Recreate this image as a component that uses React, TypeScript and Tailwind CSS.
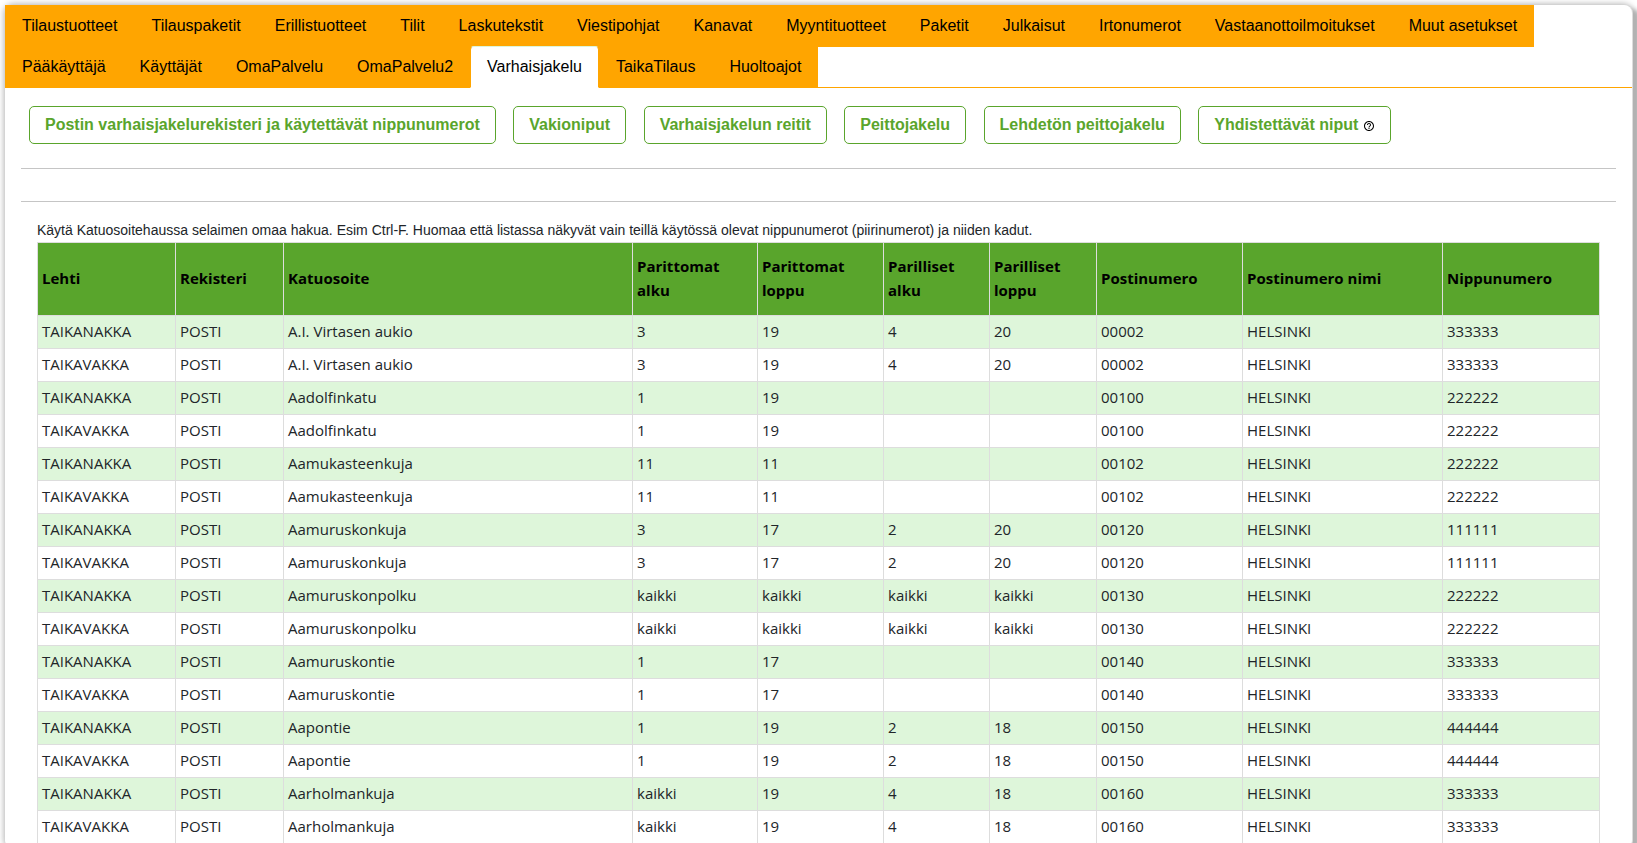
import React, { type FC } from 'react'
import clsx from 'clsx'

interface ITab {
  label: string
  isActive?: boolean
}

interface IRegisterRow {
  street: string
  odd: [string, string]
  even: [string, string]
  postalCode: string
  bundle: string
}

const TABS: ITab[] = [
  { label: 'Tilaustuotteet' },
  { label: 'Tilauspaketit' },
  { label: 'Erillistuotteet' },
  { label: 'Tilit' },
  { label: 'Laskutekstit' },
  { label: 'Viestipohjat' },
  { label: 'Kanavat' },
  { label: 'Myyntituotteet' },
  { label: 'Paketit' },
  { label: 'Julkaisut' },
  { label: 'Irtonumerot' },
  { label: 'Vastaanottoilmoitukset' },
  { label: 'Muut asetukset' },
  { label: 'Pääkäyttäjä' },
  { label: 'Käyttäjät' },
  { label: 'OmaPalvelu' },
  { label: 'OmaPalvelu2' },
  { label: 'Varhaisjakelu', isActive: true },
  { label: 'TaikaTilaus' },
  { label: 'Huoltoajot' },
]

const ACTIONS = [
  { label: 'Postin varhaisjakelurekisteri ja käytettävät nippunumerot' },
  { label: 'Vakioniput' },
  { label: 'Varhaisjakelun reitit' },
  { label: 'Peittojakelu' },
  { label: 'Lehdetön peittojakelu' },
  { label: 'Yhdistettävät niput', hasHelp: true },
]

const COLUMNS = [
  { label: 'Lehti', width: 'w-[138px]' },
  { label: 'Rekisteri', width: 'w-[108px]' },
  { label: 'Katuosoite', width: '' },
  { label: 'Parittomat alku', width: 'w-[125px]' },
  { label: 'Parittomat loppu', width: 'w-[126px]' },
  { label: 'Parilliset alku', width: 'w-[106px]' },
  { label: 'Parilliset loppu', width: 'w-[107px]' },
  { label: 'Postinumero', width: 'w-[146px]' },
  { label: 'Postinumero nimi', width: 'w-[200px]' },
  { label: 'Nippunumero', width: 'w-[157px]' },
]

const PAPERS = ['TAIKANAKKA', 'TAIKAVAKKA']

const ROWS: IRegisterRow[] = [
  { street: 'A.I. Virtasen aukio', odd: ['3', '19'], even: ['4', '20'], postalCode: '00002', bundle: '333333' },
  { street: 'Aadolfinkatu', odd: ['1', '19'], even: ['', ''], postalCode: '00100', bundle: '222222' },
  { street: 'Aamukasteenkuja', odd: ['11', '11'], even: ['', ''], postalCode: '00102', bundle: '222222' },
  { street: 'Aamuruskonkuja', odd: ['3', '17'], even: ['2', '20'], postalCode: '00120', bundle: '111111' },
  { street: 'Aamuruskonpolku', odd: ['kaikki', 'kaikki'], even: ['kaikki', 'kaikki'], postalCode: '00130', bundle: '222222' },
  { street: 'Aamuruskontie', odd: ['1', '17'], even: ['', ''], postalCode: '00140', bundle: '333333' },
  { street: 'Aapontie', odd: ['1', '19'], even: ['2', '18'], postalCode: '00150', bundle: '444444' },
  { street: 'Aarholmankuja', odd: ['kaikki', '19'], even: ['4', '18'], postalCode: '00160', bundle: '333333' },
]

export default function App() {
  return (
    <div className="h-screen overflow-hidden bg-white p-[5px] font-['Liberation_Sans',Arial,sans-serif] text-base text-[#212529]">
      <main className="min-h-screen rounded-lg bg-white shadow-[1px_0_0_#dddddd,8px_4px_4px_#b2b2b2,0_0_6px_1px_#b2b2b2]">
        <Tabs />
        <div className="px-4">
          <Actions />
          <hr className="mt-6 border-[#c5c5c5]" />
          <hr className="mt-8 border-[#c5c5c5]" />
          <div className="px-4 pt-4">
            <p className="text-sm leading-6">
              Käytä Katuosoitehaussa selaimen omaa hakua. Esim Ctrl-F. Huomaa
              että listassa näkyvät vain teillä käytössä olevat nippunumerot
              (piirinumerot) ja niiden kadut.
            </p>
            <RegisterTable />
          </div>
        </div>
      </main>
    </div>
  )
}

const Tabs: FC = () => {
  return (
    <nav>
      <ul className="flex flex-wrap border-b border-[#ffa500]">
        {TABS.map(({ label, isActive }) => (
          <li key={label} className="-mb-px bg-[#ffa500]">
            <a
              href="#"
              aria-current={isActive ? 'page' : undefined}
              className={clsx(
                'block rounded-t border px-4 py-2 text-black',
                isActive
                  ? 'border-x-[#ffa500] border-t-[#ddf5da] border-b-white bg-white'
                  : 'border-transparent'
              )}
            >
              {label}
            </a>
          </li>
        ))}
      </ul>
    </nav>
  )
}

const Actions: FC = () => {
  return (
    <div className="px-2 pt-[18px]">
      {ACTIONS.map(({ label, hasHelp }) => (
        <React.Fragment key={label}>
          <button
            type="button"
            className="mr-[13px] inline-flex items-center gap-[5px] rounded-[5px] border border-[#5aa52c] bg-white px-[15px] py-1.5 align-top font-bold text-[#5aa52c]"
          >
            {label}
            {hasHelp && <HelpIcon />}
          </button>{' '}
        </React.Fragment>
      ))}
    </div>
  )
}

const HelpIcon: FC = () => {
  return (
    <svg
      viewBox="0 0 24 24"
      className="mt-0.5 size-3 text-black"
      fill="currentColor"
      aria-hidden="true"
    >
      <path d="M11 18h2v-2h-2v2zm1-16C6.48 2 2 6.48 2 12s4.48 10 10 10 10-4.48 10-10S17.52 2 12 2zm0 18c-4.41 0-8-3.59-8-8s3.59-8 8-8 8 3.59 8 8-3.59 8-8 8zm0-14c-2.21 0-4 1.79-4 4h2c0-1.1.9-2 2-2s2 .9 2 2c0 2-3 1.75-3 5h2c0-2.25 3-2.5 3-5 0-2.21-1.79-4-4-4z" />
    </svg>
  )
}

const RegisterTable: FC = () => {
  return (
    <table className="w-full table-fixed border-collapse font-['Open_Sans','Noto_Sans',sans-serif] text-[15px] leading-6">
      <thead>
        <tr className="bg-[#59a52c] text-left text-black">
          {COLUMNS.map(({ label, width }) => (
            <th
              key={label}
              scope="col"
              className={clsx(
                'border border-[#dddddd] px-1 pt-[11px] pb-[13px] font-bold',
                width
              )}
            >
              {label}
            </th>
          ))}
        </tr>
      </thead>
      <tbody>
        {ROWS.flatMap((row) =>
          PAPERS.map((paper) => (
            <tr key={`${row.street}-${paper}`} className="odd:bg-[#def6da]">
              {[
                paper,
                'POSTI',
                row.street,
                ...row.odd,
                ...row.even,
                row.postalCode,
                'HELSINKI',
                row.bundle,
              ].map((value, i) => (
                <td
                  key={i}
                  className="h-[33px] border border-[#dddddd] px-1 pb-0.5"
                >
                  {value}
                </td>
              ))}
            </tr>
          ))
        )}
      </tbody>
    </table>
  )
}
